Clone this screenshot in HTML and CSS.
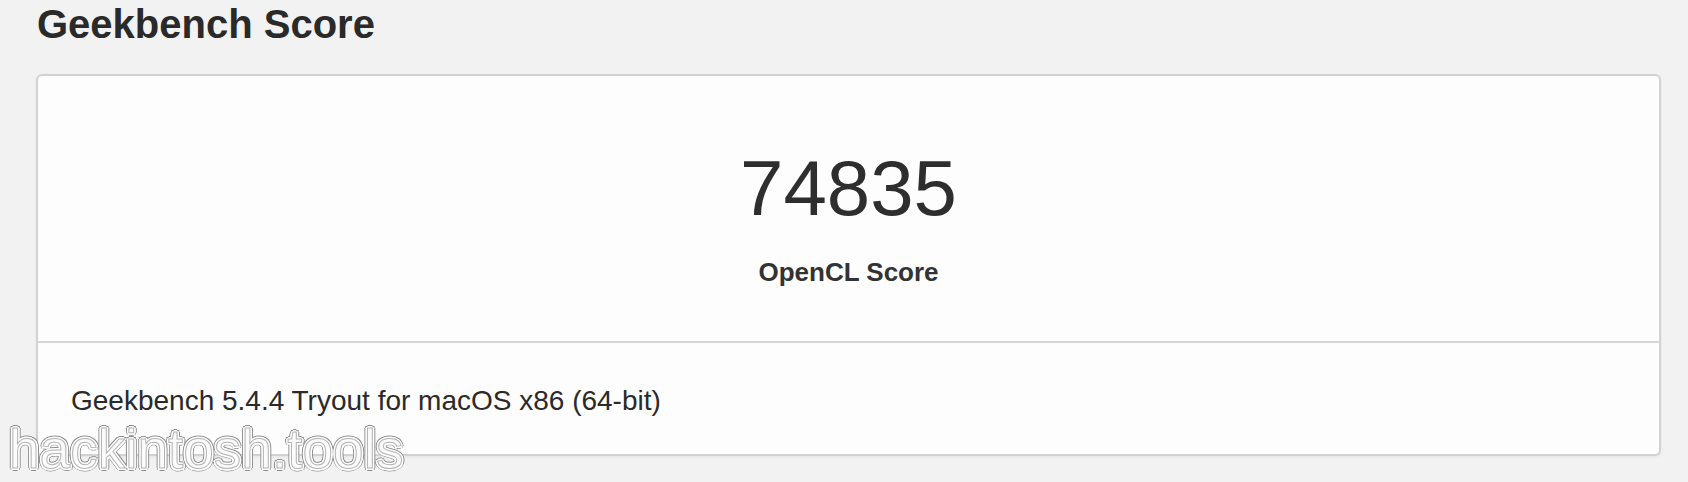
FILE: index.html
```html
<!DOCTYPE html>
<html>
<head>
<meta charset="utf-8">
<link rel="stylesheet" href="styles.css">
</head>
<body>
<div class="page">
  <h1 class="title">Geekbench Score</h1>
  <div class="card">
    <div class="score-section">
      <div class="score">74835</div>
      <div class="score-label">OpenCL Score</div>
    </div>
    <div class="card-footer">Geekbench 5.4.4 Tryout for macOS x86 (64-bit)</div>
  </div>
</div>
<div class="watermark">hackintosh.tools</div>
</body>
</html>
```
FILE: styles.css
```css
html, body {
  margin: 0;
  padding: 0;
  background: #f2f2f2;
  font-family: "Liberation Sans", Arial, Helvetica, sans-serif;
  color: #2c2c2c;
}
.page {
  position: relative;
  height: 482px;
  overflow: hidden;
}
.title {
  margin: 0 0 26px 37px;
  font-size: 40px;
  line-height: 48px;
  font-weight: bold;
  color: #2a2a2a;
}
.card {
  margin: 0 27px 0 36px;
  background: #fdfdfd;
  border: 2px solid #d2d2d2;
  border-radius: 6px;
  box-shadow: 0 1px 3px rgba(0,0,0,0.06);
}
.score-section {
  display: flex;
  flex-direction: column;
  align-items: center;
  padding: 67px 0 54px;
  gap: 24px;
}
.score {
  font-size: 78px;
  line-height: 90px;
  font-weight: normal;
  color: #2e2e2e;
}
.score-label {
  font-size: 26px;
  line-height: 30px;
  font-weight: bold;
  color: #333;
}
.card-footer {
  border-top: 2px solid #d6d6d6;
  padding: 42px 33px 37px;
  font-size: 28px;
  line-height: 32px;
  color: #2a2a2a;
}
.watermark {
  position: absolute;
  left: 9px;
  top: 422px;
  font-family: "Liberation Sans", Arial, sans-serif;
  font-size: 55px;
  line-height: 55px;
  color: #fbfbfb;
  -webkit-text-stroke: 1px #b4b4b4;
  text-shadow:
    2px 0 0 #fff, -2px 0 0 #fff, 0 2px 0 #fff, 0 -2px 0 #fff,
    1.5px 1.5px 0 #fff, -1.5px 1.5px 0 #fff, 1.5px -1.5px 0 #fff, -1.5px -1.5px 0 #fff,
    3px 0 0 #8e8e8e, -3px 0 0 #8e8e8e, 0 3px 0 #8e8e8e, 0 -3px 0 #8e8e8e,
    2.2px 2.2px 0 #8e8e8e, -2.2px 2.2px 0 #8e8e8e, 2.2px -2.2px 0 #8e8e8e, -2.2px -2.2px 0 #8e8e8e;
}
```
